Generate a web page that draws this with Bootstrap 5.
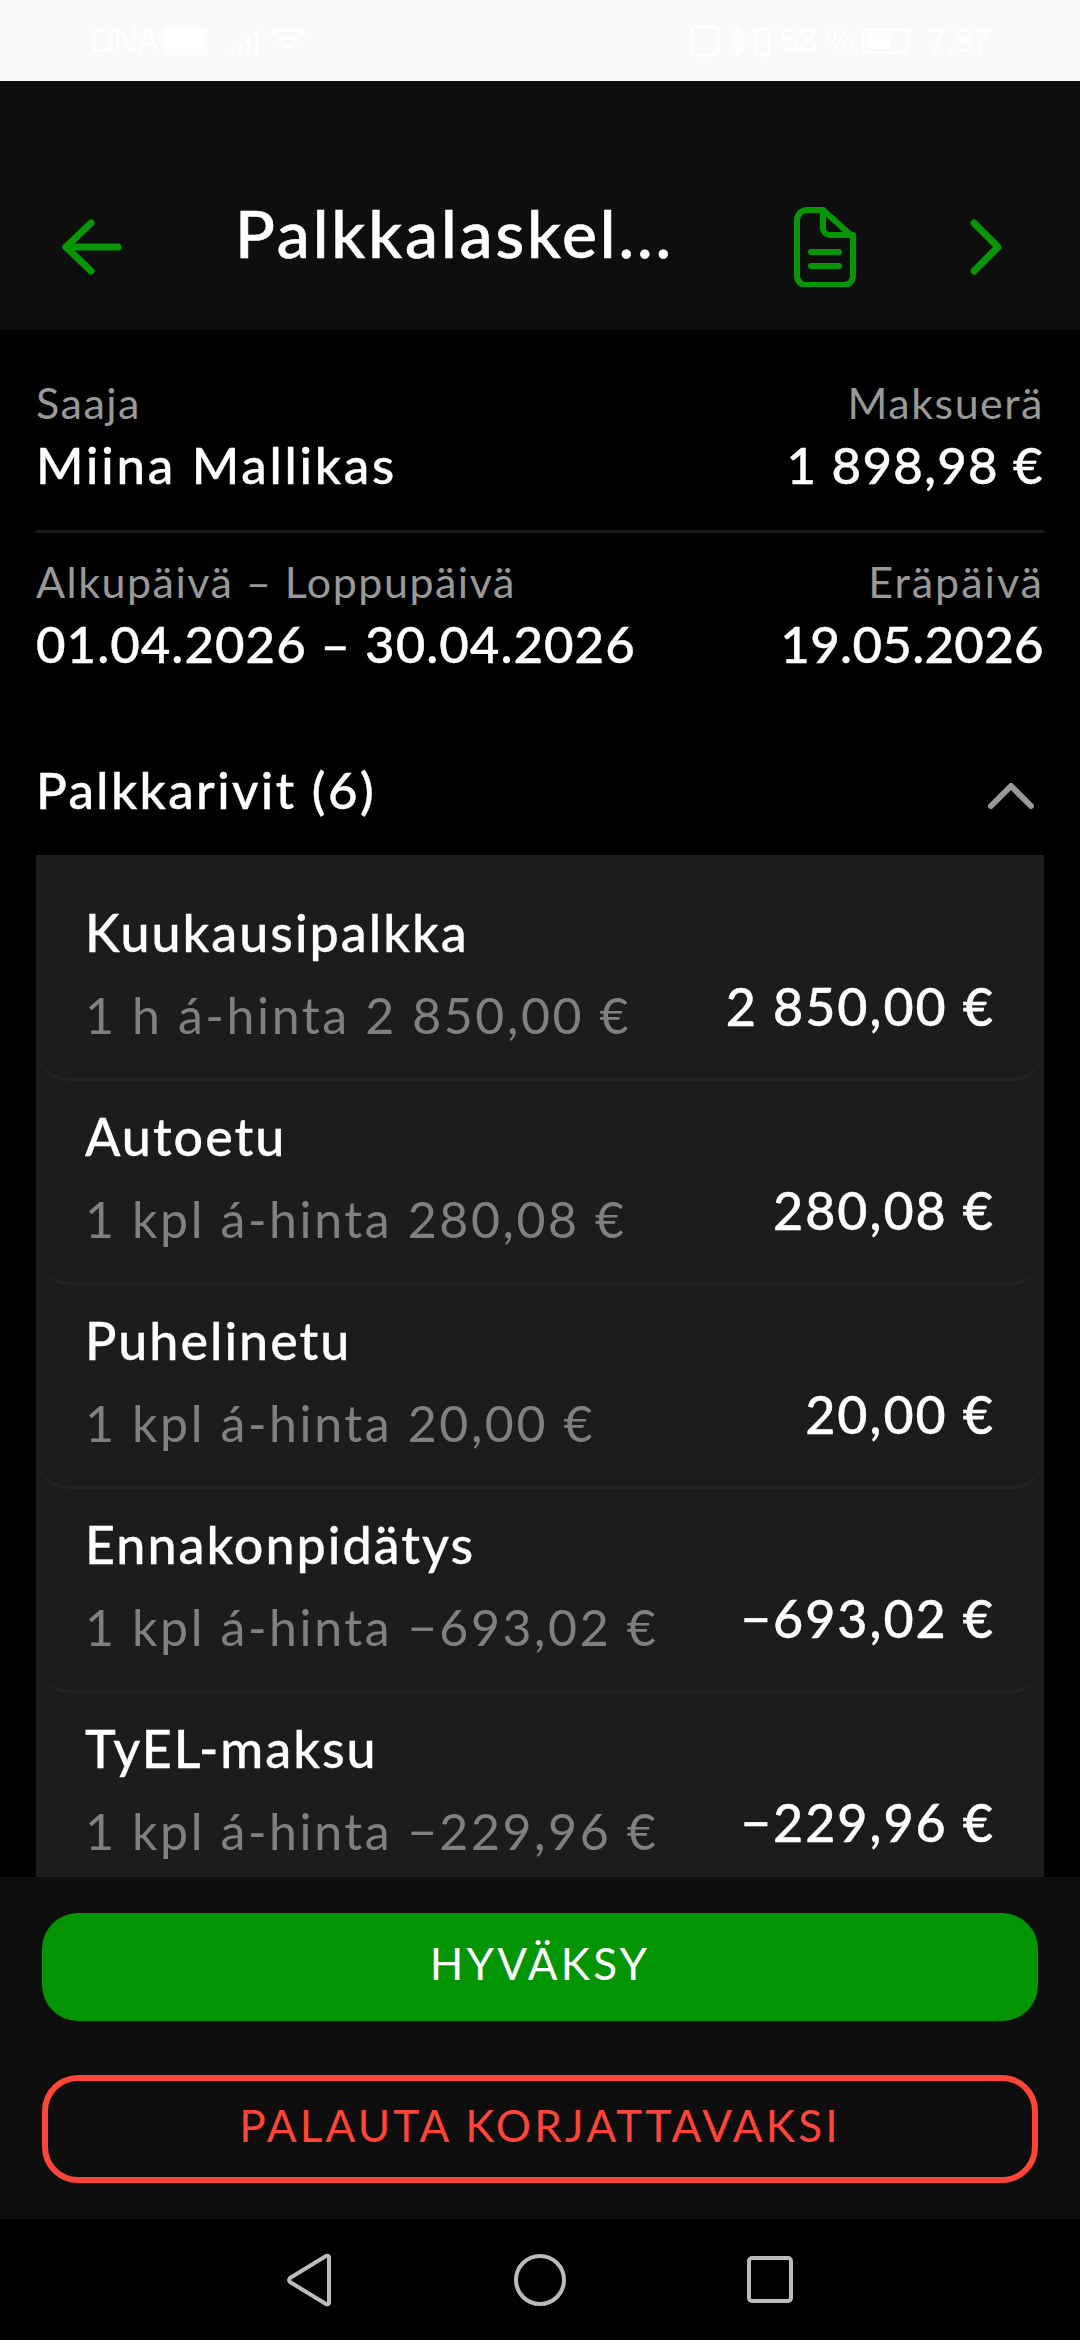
<!DOCTYPE html>
<html lang="fi">
<head>
    <meta charset="UTF-8">
    <meta name="viewport" content="width=device-width, initial-scale=1.0">
    <title>Palkkalaskelma</title>
    <link href="https://cdn.jsdelivr.net/npm/bootstrap@5.3.0/dist/css/bootstrap.min.css" rel="stylesheet">
    <style>
        html, body { height: 2340px; }
        body { background: #000; color: #fff; font-family: "Lato", "Liberation Sans", sans-serif; overflow: hidden; }
        .status-strip { height: 81px; background: #fafafa; color: #fff; font-family: "Liberation Sans", sans-serif; font-size: 34px; letter-spacing: -1px; padding: 0 90px; }
        .status-strip svg { display: block; }
        .top-bar { height: 249px; background: #0e0e0e; padding: 134px 78px 0 62px; }
        .top-title { font-size: 66px; font-weight: 500; letter-spacing: 2.9px; margin: -18px 0 0 113px; line-height: 72px; width: 436px; white-space: nowrap; -webkit-text-stroke: 0.6px #fff; }
        .top-doc { margin-top: -8px; }
        .top-next { margin-left: 114px; }
        .content-area { min-height: 0; overflow: hidden; padding: 0 36px; }
        .info-row { line-height: 64px; }
        .info-first { padding-top: 41px; }
        .info-second { padding-top: 17px; }
        .info-label { font-size: 43px; letter-spacing: 1.5px; color: #999; }
        .info-value { font-size: 51px; font-weight: 500; letter-spacing: 1px; margin-top: -2px; -webkit-text-stroke: 0.4px #fff; }
        .info-name { letter-spacing: 2.8px; }
        .info-sum { letter-spacing: 1.3px; }
        .info-due { letter-spacing: 0.3px; }
        .info-label-due { letter-spacing: 2px; }
        .info-sep { height: 3px; background: #1c1c1c; margin: 33px 0 0; border: 0; opacity: 1; }
        .section-head { font-size: 51px; font-weight: 500; letter-spacing: 2.4px; height: 72px; line-height: 72px; margin-top: 78px; margin-bottom: 29px; padding-right: 10px; -webkit-text-stroke: 0.4px #fff; }
        .section-arrow { margin-top: 12px; }
        .pay-list { background: #1c1c1c; padding-top: 22px; border-radius: 0; }
        .pay-list .list-group-item { height: 204px; background: #1c1c1c; color: #fff; padding: 13px 49px 0 49px; border: 0; border-bottom: 3px solid #232323; border-radius: 0 0 32px 32px; }
        .row-title { font-size: 52px; font-weight: 500; letter-spacing: 2px; line-height: 84px; -webkit-text-stroke: 0.3px #fff; }
        .row-sub { font-size: 50px; letter-spacing: 2.6px; color: #808080; line-height: 84px; margin-top: -1px; }
        .row-amount { font-size: 52px; font-weight: 500; letter-spacing: 2px; line-height: 84px; margin-top: 74px; -webkit-text-stroke: 0.4px #fff; }
        .bottom-panel { height: 342px; background: #0e0e0e; padding: 36px 42px 0; gap: 54px; }
        .bottom-panel .btn { height: 108px; border-radius: 36px; font-size: 44px; letter-spacing: 3.2px; line-height: 1; padding: 0 0 8px; }
        .btn-accept, .btn-accept:hover { background: #049504; border: 0; color: #fff; }
        .btn-return, .btn-return:hover { background: transparent; border: 6px solid #ff4438; color: #ff4438; }
        .system-nav { height: 121px; background: #000; }
    </style>
</head>
<body class="d-flex flex-column">
    <div class="status-strip d-flex align-items-center flex-shrink-0">
        <span>DNA</span>
        <svg width="44" height="28" viewBox="0 0 44 28" class="ms-1"><rect width="44" height="28" rx="3" fill="#fff"/></svg>
        <svg width="78" height="30" viewBox="0 0 78 30" class="ms-4" fill="#fff"><path d="M0 24h4v4H0zM8 18h4v10H8zM16 10h4v18h-4zM24 3h3v25h-3z"/><path d="M40 10a24 24 0 0 1 34 0M46 16a15 15 0 0 1 22 0M52 22a7 7 0 0 1 10 0" fill="none" stroke="#fff" stroke-width="3"/></svg>
        <svg width="82" height="32" viewBox="0 0 82 32" class="ms-auto" fill="none" stroke="#fff" stroke-width="3"><rect x="2" y="2" width="26" height="28" rx="4"/><path d="M40 8l14 14-7 7V3l7 7-14 12"/><rect x="66" y="4" width="13" height="26" rx="2"/></svg>
        <span class="ms-2">53 %</span>
        <svg width="50" height="26" viewBox="0 0 50 26" class="ms-2" fill="#fff"><rect x="1.500" y="1.500" width="44" height="23" rx="3" fill="none" stroke="#fff" stroke-width="3"/><rect x="5" y="5" width="24" height="16"/></svg>
        <span class="ms-3">7.37</span>
    </div>

    <header class="top-bar d-flex align-items-start flex-shrink-0">
        <svg width="60" height="56" viewBox="0 0 60 56" class="mt-1 flex-shrink-0" fill="none" stroke="#069606" stroke-width="7" stroke-linecap="round" stroke-linejoin="round"><path d="M29 4 4 28l25 24"/><path d="M4 28h52"/></svg>
        <h1 class="top-title">Palkkalaskel...</h1>
        <svg width="62" height="80" viewBox="0 0 62 80" class="top-doc ms-auto flex-shrink-0" fill="none" stroke="#069606" stroke-width="6" stroke-linecap="round" stroke-linejoin="round"><path d="M13 3h16l30 27v39a9 9 0 0 1-9 9H12a9 9 0 0 1-9-9V13A10 10 0 0 1 13 3z"/><path d="M29 3v18a7 7 0 0 0 7 7h23"/><path d="M17 45h28M17 59h28"/></svg>
        <svg width="32" height="56" viewBox="0 0 32 56" class="top-next mt-1 flex-shrink-0" fill="none" stroke="#069606" stroke-width="7" stroke-linecap="round" stroke-linejoin="round"><path d="m4 4 24 24L4 52"/></svg>
    </header>

    <main class="content-area flex-grow-1">
        <div class="info-row info-first d-flex justify-content-between">
            <div><div class="info-label">Saaja</div><div class="info-value info-name">Miina Mallikas</div></div>
            <div class="text-end"><div class="info-label">Maksuerä</div><div class="info-value info-sum">1 898,98 €</div></div>
        </div>
        <hr class="info-sep">
        <div class="info-row info-second d-flex justify-content-between">
            <div><div class="info-label">Alkupäivä – Loppupäivä</div><div class="info-value">01.04.2026 – 30.04.2026</div></div>
            <div class="text-end"><div class="info-label info-label-due">Eräpäivä</div><div class="info-value info-due">19.05.2026</div></div>
        </div>
        <div class="section-head d-flex justify-content-between align-items-center">
            <span>Palkkarivit (6)</span>
            <svg width="46" height="26" viewBox="0 0 46 26" class="section-arrow" fill="none" stroke="#999" stroke-width="6" stroke-linecap="round" stroke-linejoin="round"><path d="M3 23 23 3l20 20"/></svg>
        </div>
        <div class="list-group pay-list">
            <div class="list-group-item d-flex justify-content-between"><div><div class="row-title">Kuukausipalkka</div><div class="row-sub">1 h á-hinta 2 850,00 €</div></div><div class="row-amount">2 850,00 €</div></div>
            <div class="list-group-item d-flex justify-content-between"><div><div class="row-title">Autoetu</div><div class="row-sub">1 kpl á-hinta 280,08 €</div></div><div class="row-amount">280,08 €</div></div>
            <div class="list-group-item d-flex justify-content-between"><div><div class="row-title">Puhelinetu</div><div class="row-sub">1 kpl á-hinta 20,00 €</div></div><div class="row-amount">20,00 €</div></div>
            <div class="list-group-item d-flex justify-content-between"><div><div class="row-title">Ennakonpidätys</div><div class="row-sub">1 kpl á-hinta −693,02 €</div></div><div class="row-amount">−693,02 €</div></div>
            <div class="list-group-item d-flex justify-content-between"><div><div class="row-title">TyEL-maksu</div><div class="row-sub">1 kpl á-hinta −229,96 €</div></div><div class="row-amount">−229,96 €</div></div>
        </div>
    </main>

    <section class="bottom-panel d-flex flex-column flex-shrink-0">
        <button class="btn btn-accept w-100">HYVÄKSY</button>
        <button class="btn btn-return w-100">PALAUTA KORJATTAVAKSI</button>
    </section>

    <nav class="system-nav d-flex align-items-center justify-content-center flex-shrink-0">
        <svg width="820" height="60" viewBox="0 0 820 60" fill="none" stroke="#bbb" stroke-width="4" stroke-linejoin="round"><path d="M199 7v46a2 2 0 0 1-3 1L160 32a3 3 0 0 1 0-4L196 6a2 2 0 0 1 3 1z"/><circle cx="410" cy="30" r="24"/><rect x="619" y="8" width="42" height="43" rx="3"/></svg>
    </nav>
</body>
</html>
